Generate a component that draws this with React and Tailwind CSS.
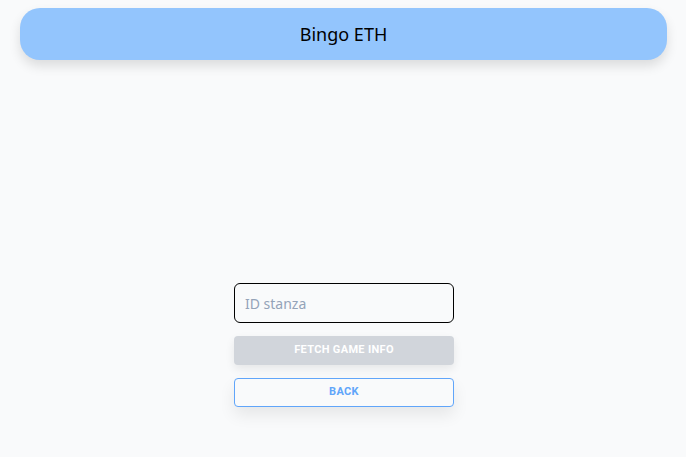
export default function App() {
  return (
    <div className="min-h-[457px] bg-[#f9fafb] pt-2" style={{ fontFamily: '"Noto Sans", sans-serif' }}>
      <header className="ml-5 mr-[19px] flex h-[52px] items-center justify-center rounded-[20px] bg-[#93c5fd] shadow-[0_6px_12px_rgba(0,0,0,0.12)]">
        <h1 className="text-[18px] text-black">Bingo ETH</h1>
      </header>

      <div className="mt-[223px] flex flex-col items-center pl-[2px]">
        <div className="flex w-[220px] flex-col gap-[13px]">
          <input
            placeholder="ID stanza"
            className="h-10 w-full rounded-md border border-black bg-transparent px-[10px] text-[14px] text-gray-800 outline-none placeholder:text-[#94a3b8]"
          />
          <button
            disabled
            className="h-[29px] w-full rounded bg-[#d1d5db] text-[11px] font-bold uppercase tracking-[0.03em] text-white shadow-[0_4px_10px_rgba(0,0,0,0.08)]"
            style={{ fontFamily: 'Roboto, sans-serif' }}
          >
            Fetch game info
          </button>
          <button
            className="h-[29px] w-full rounded border border-[#60a5fa] bg-[#f9fafb] text-[11px] font-bold uppercase tracking-[0.03em] text-[#60a5fa] shadow-[0_8px_16px_rgba(0,0,0,0.08)]"
            style={{ fontFamily: 'Roboto, sans-serif' }}
          >
            Back
          </button>
        </div>
      </div>
    </div>
  );
}
